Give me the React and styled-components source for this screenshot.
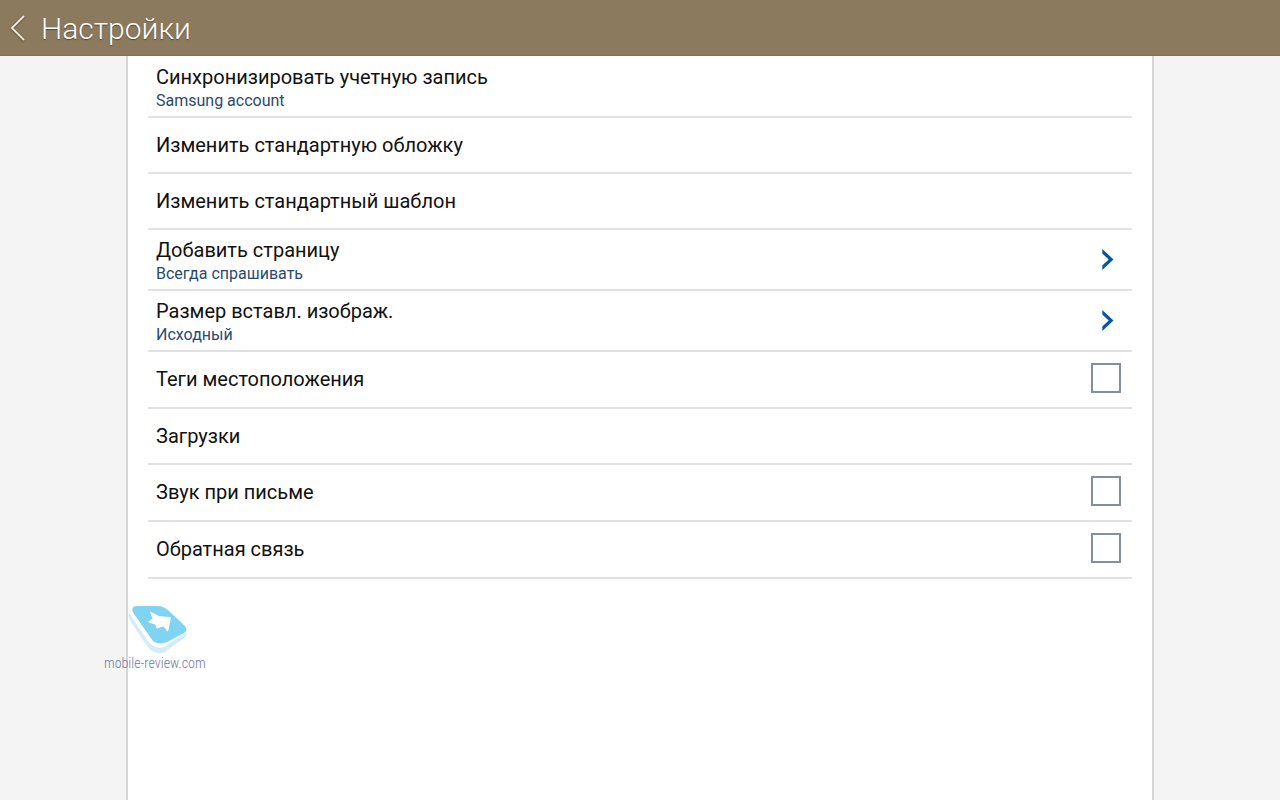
import React from "react";
import styled, { createGlobalStyle } from "styled-components";

const GlobalStyle = createGlobalStyle`
  *, *::before, *::after { box-sizing: border-box; }
  html, body, #root { height: 100%; }
  body {
    margin: 0;
    background: #f4f4f4;
    color: #111;
    font-family: Roboto, "Noto Sans", sans-serif;
  }
`;

const Screen = styled.div`
  position: relative;
  display: flex;
  flex-direction: column;
  min-height: 100%;
`;

const Header = styled.header`
  display: flex;
  align-items: center;
  gap: 13px;
  height: 56px;
  padding: 0 8px;
  background: linear-gradient(#8c7a5e 0, #8c7a5e 54px, #826d50 56px);
`;

const BackButton = styled.button`
  display: flex;
  padding: 0;
  border: 0;
  background: none;
  color: #fff;
  cursor: pointer;
`;

const BackIcon = styled.svg`
  width: 20px;
  height: 28px;
  filter: drop-shadow(0 1px 1px rgba(60, 40, 10, 0.5));
`;

const Title = styled.h1`
  margin: 0;
  padding-top: 2px;
  color: #fff;
  font-size: 30px;
  font-weight: 300;
  line-height: 36px;
  text-shadow: 0 1px 1px rgba(60, 40, 10, 0.6);
`;

const Panel = styled.main`
  flex: 1;
  margin: 0 126px;
  padding: 0 20px;
  border: solid #d6d6d6;
  border-width: 0 2px;
  background: #fff;
`;

const List = styled.ul`
  margin: 0;
  padding: 1px 0 0;
  list-style: none;
`;

const Item = styled.li`
  border-bottom: 2px solid #e1e1e1;
`;

const Row = styled.div`
  display: flex;
  align-items: center;
  justify-content: space-between;
  width: 100%;
  min-height: ${(p) => (p.$tall ? 59 : 54)}px;
  padding: 0 8px;
  border: 0;
  background: none;
  color: inherit;
  font: inherit;
  text-align: left;
  cursor: pointer;
`;

const CheckRow = styled(Row)`
  padding: 11px 11px 14px 8px;
`;

const Texts = styled.span`
  display: flex;
  flex-direction: column;
  padding-top: ${(p) => (p.$tall ? 2 : 0)}px;
`;

const Label = styled.span`
  font-size: 20px;
  line-height: 26px;
`;

const CheckLabel = styled(Label)`
  padding-top: 2px;
`;

const Summary = styled.span`
  color: #2a4a6c;
  font-size: 16px;
  line-height: 22px;
`;

const Chevron = styled.svg`
  width: 12px;
  height: 22px;
  margin-right: 10px;
`;

const Checkbox = styled.input`
  appearance: none;
  width: 30px;
  height: 30px;
  margin: 0;
  border: 2px solid #83909b;
  background: #fff;
  cursor: pointer;

  &:checked {
    box-shadow: inset 0 0 0 5px #fff;
    background: #0a57a0;
  }
`;

const Watermark = styled.a`
  position: absolute;
  top: 605px;
  left: 104px;
  display: flex;
  flex-direction: column;
  color: #7078a6;
  font-family: "Roboto Condensed", "Liberation Sans Narrow", sans-serif;
  font-size: 14px;
  font-weight: 300;
  line-height: 16px;
  text-decoration: none;
`;

const Logo = styled.svg`
  width: 60px;
  height: 50px;
  margin-left: 24px;
`;

const settings = [
  { label: "Синхронизировать учетную запись", summary: "Samsung account" },
  { label: "Изменить стандартную обложку" },
  { label: "Изменить стандартный шаблон" },
  { label: "Добавить страницу", summary: "Всегда спрашивать", opens: true },
  { label: "Размер вставл. изображ.", summary: "Исходный", opens: true },
  { label: "Теги местоположения", id: "location-tags" },
  { label: "Загрузки" },
  { label: "Звук при письме", id: "writing-sound" },
  { label: "Обратная связь", id: "feedback" },
];

function Setting({ label, summary, opens, id }) {
  if (id) {
    return (
      <Item>
        <CheckRow as="label" htmlFor={id}>
          <CheckLabel>{label}</CheckLabel>
          <Checkbox type="checkbox" id={id} />
        </CheckRow>
      </Item>
    );
  }
  const tall = Boolean(summary);
  return (
    <Item>
      <Row as="button" type="button" $tall={tall}>
        <Texts $tall={tall}>
          <Label>{label}</Label>
          {summary && <Summary>{summary}</Summary>}
        </Texts>
        {opens && (
          <Chevron viewBox="0 0 12 22" aria-hidden="true">
            <path d="M0.3 0 11.5 10.5 0.3 21V16.5L6.7 10.5 0.3 4.5Z" fill="#0757a0" />
          </Chevron>
        )}
      </Row>
    </Item>
  );
}

export default function App() {
  return (
    <Screen>
      <GlobalStyle />
      <Header>
        <BackButton type="button" aria-label="Назад">
          <BackIcon viewBox="0 0 20 28" fill="none" stroke="currentColor" strokeWidth="1.6">
            <path d="M16 2 4 14 16 26" />
          </BackIcon>
        </BackButton>
        <Title>Настройки</Title>
      </Header>
      <Panel>
        <List>
          {settings.map((item) => (
            <Setting key={item.label} {...item} />
          ))}
        </List>
      </Panel>
      <Watermark href="#mobile-review">
        <Logo viewBox="0 0 60 50" aria-hidden="true">
          <path
            d="M1 8C0 11 1 14 3 17L19 41C23 47 31 50 37 47L56 33C59 31 59 28 58 25L30 37Z"
            fill="#d6ebfa"
          />
          <path
            d="M3 5C2 8 3 11 5 14L20 36C24 42 31 44 36 42L56 29C59 27 59 25 58 22L30 30Z"
            fill="#fff"
          />
          <path
            d="M9 1H30C34 1 38 3 41 6L56 20C59 23 59 26 56 28L39 37C35 39 28 39 25 36L6 9C3 4 4 1 9 1Z"
            fill="#81d4f1"
          />
          <path d="M22 6.5 31 11 43 12.3 40 27 35.5 21.5 29 23.5 27 19.5 20 17 24.5 13.5Z" fill="#fff" />
        </Logo>
        mobile-review.com
      </Watermark>
    </Screen>
  );
}
